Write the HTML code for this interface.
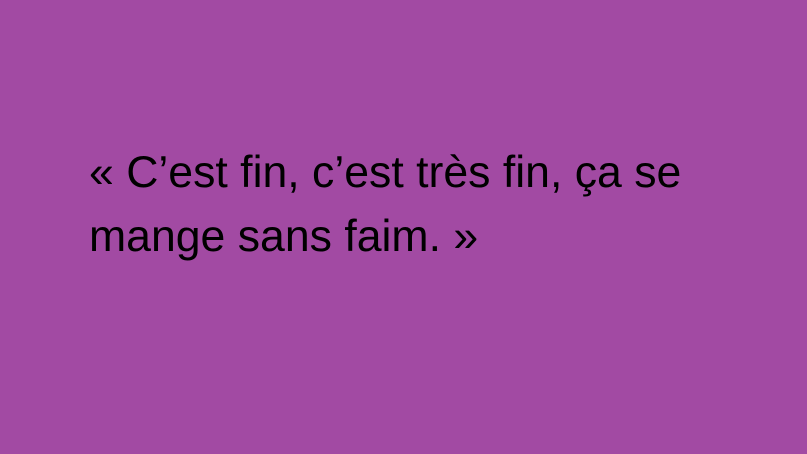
<!DOCTYPE html>
<html><head><meta charset="utf-8"><style>
html,body{margin:0;padding:0}
body{width:807px;height:454px;background:#a24aa3;overflow:hidden;position:relative}
p{position:absolute;left:89px;top:141px;margin:0;font-family:"Liberation Sans",sans-serif;font-size:44.6px;line-height:64px;color:#000;white-space:nowrap}
</style></head><body>
<p>« C’est fin, c’est très fin, ça se<br>mange sans faim. »</p>
</body></html>
